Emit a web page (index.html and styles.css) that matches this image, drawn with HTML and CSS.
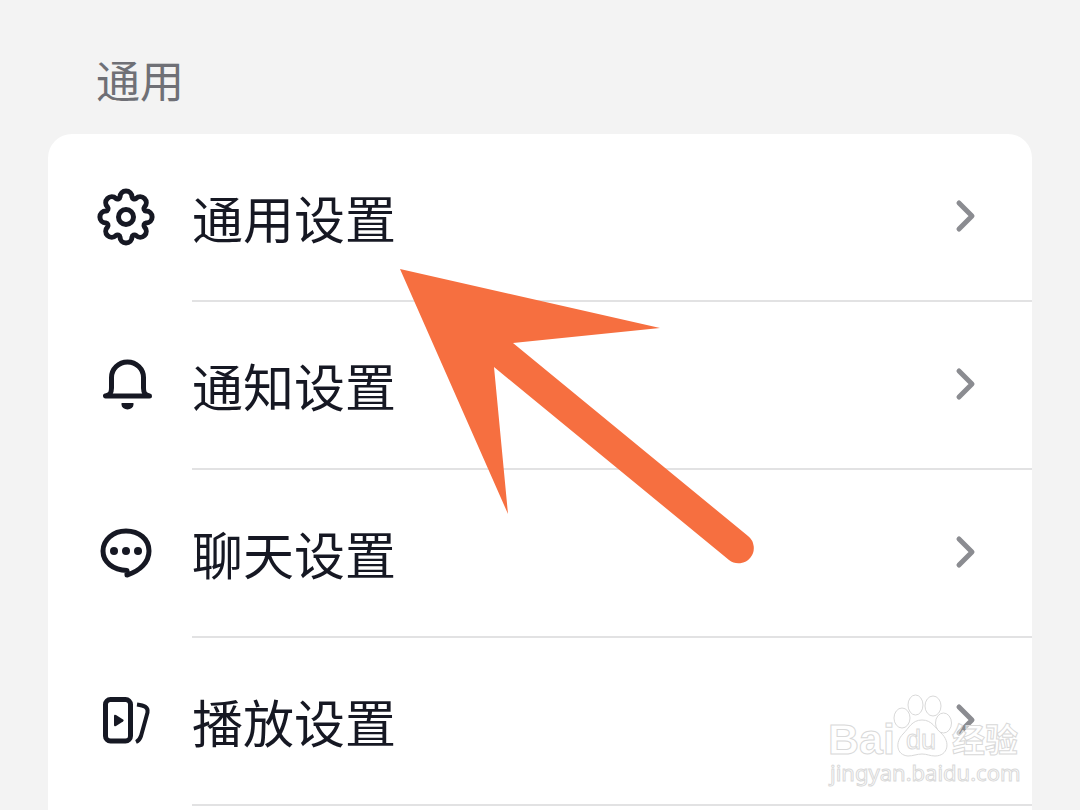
FILE: index.html
```html
<!DOCTYPE html>
<html lang="zh-CN">
<head>
  <meta charset="UTF-8">
  <meta name="viewport" content="width=device-width, initial-scale=1.0">
  <title>通用</title>
  <link rel="stylesheet" href="styles.css">
</head>
<body>
  <h2 class="section-title">通用</h2>

  <nav class="card">
    <a class="row" href="#general">
      <svg class="icon" viewBox="-30 -29 60 60">
        <path d="M-6-20.1A6 6 0 0 1 6-20.1A2.5 2.5 0 0 0 10-18.5A6 6 0 0 1 18.5-10A2.5 2.5 0 0 0 20.1-6A6 6 0 0 1 20.1 6A2.5 2.5 0 0 0 18.5 10A6 6 0 0 1 10 18.5A2.5 2.5 0 0 0 6 20.1A6 6 0 0 1 -6 20.1A2.5 2.5 0 0 0 -10 18.5A6 6 0 0 1 -18.5 10A2.5 2.5 0 0 0 -20.1 6A6 6 0 0 1 -20.1-6A2.5 2.5 0 0 0 -18.5-10A6 6 0 0 1 -10-18.5A2.5 2.5 0 0 0 -6-20.1Z"/>
        <circle cx="0" cy="0" r="7.5"/>
      </svg>
      <span class="row-body">
        <span class="label">通用设置</span>
        <svg class="chevron" viewBox="0 0 24 36"><path d="M7 4L20 17L7 30"/></svg>
      </span>
    </a>

    <a class="row" href="#notify">
      <svg class="icon" viewBox="0 1 60 60">
        <path d="M9.5 41H53.5C48 40 47.5 37 47.5 33V22.5a16 15.5 0 0 0-32 0V33C15.5 37 15 40 9.5 41Z"/>
        <path class="solid" d="M26 48h11q1 0 .5 1.5a6 5 0 0 1-12 0Q25 48 26 48z"/>
      </svg>
      <span class="row-body">
        <span class="label">通知设置</span>
        <svg class="chevron" viewBox="0 0 24 36"><path d="M7 4L20 17L7 30"/></svg>
      </span>
    </a>

    <a class="row" href="#chat">
      <svg class="icon" viewBox="0 1 60 60">
        <path d="M31 47.5V52C44 48 53 39 53 28C53 16 43 8 30 8S7 17 7 28S17 47 31 47.5Z"/>
        <circle class="solid" cx="18" cy="28" r="4"/>
        <circle class="solid" cx="30" cy="28" r="4"/>
        <circle class="solid" cx="42" cy="28" r="4"/>
      </svg>
      <span class="row-body">
        <span class="label">聊天设置</span>
        <svg class="chevron" viewBox="0 0 24 36"><path d="M7 4L20 17L7 30"/></svg>
      </span>
    </a>

    <a class="row" href="#play">
      <svg class="icon" viewBox="0 1 60 60">
        <rect x="9.5" y="8.5" width="25" height="41.5" rx="5"/>
        <path class="solid" d="M18 25q0-2 2-1l7 4.5q1.5 1 0 2l-7 4.5q-2 1-2-1z"/>
        <path class="flat" d="M41 13.5C48 14.5 52.5 16 51.5 21.5L45 45Q43.5 49.5 40 51"/>
      </svg>
      <span class="row-body">
        <span class="label">播放设置</span>
        <svg class="chevron" viewBox="0 0 24 36"><path d="M7 4L20 17L7 30"/></svg>
      </span>
    </a>
  </nav>

  <!-- Pointer arrow -->
  <svg class="pointer" viewBox="400 269 356 296">
    <path d="M400 269L660 328L513 343L748 536A15 15 0 0 1 729 560L494 367L508 514Z"/>
  </svg>

  <!-- Watermark -->
  <svg class="watermark" viewBox="820 690 210 100">
    <g class="paw">
      <ellipse cx="902" cy="718" rx="8" ry="10"/>
      <ellipse cx="915.5" cy="705" rx="7.5" ry="10"/>
      <ellipse cx="933" cy="706" rx="8" ry="10"/>
      <ellipse cx="943.5" cy="723" rx="8" ry="10"/>
      <path d="M922 720C932 720 935 728 941 733C951 742 948 756 935 756C930 756 927 754 922 754S913 756 908 756C896 755 895 742 903 734C909 728 912 720 922 720Z"/>
    </g>
    <text class="wm-name" x="828" y="754">Bai</text>
    <text class="wm-du" x="906" y="749">du</text>
    <text class="wm-cjk" x="952" y="752">经验</text>
    <text class="wm-url" x="830" y="781">jingyan.baidu.com</text>
  </svg>
</body>
</html>
```
FILE: styles.css
```css
* {
  box-sizing: border-box;
}
body {
  position: relative;
  display: flex;
  flex-direction: column;
  min-height: 100vh;
  margin: 0;
  background-color: #f3f3f3;
  font-family: "Noto Sans CJK SC", sans-serif;
}
.section-title {
  margin: 0;
  padding: 47px 96px 23px;
  font-size: 44px;
  font-weight: 400;
  line-height: 64px;
  color: #6f7076;
}
.card {
  flex: 1;
  margin: 0 48px;
  padding-left: 48px;
  background-color: #fff;
  border-radius: 24px 24px 0 0;
}
.row {
  display: flex;
  align-items: center;
  gap: 36px;
  height: 168px;
  color: #161823;
  text-decoration: none;
}
.icon {
  flex: none;
  width: 60px;
  height: 60px;
  fill: none;
  stroke: #161823;
  stroke-width: 5;
  stroke-linecap: round;
  stroke-linejoin: round;
}
.icon .solid {
  fill: #161823;
  stroke: none;
}
.icon .flat {
  stroke-width: 4;
  stroke-linecap: butt;
}
.row-body {
  flex: 1;
  display: flex;
  align-items: center;
  justify-content: space-between;
  height: 100%;
  padding-right: 56px;
  border-bottom: 2px solid #e2e2e3;
}
.label {
  font-size: 51px;
  line-height: 72px;
}
.chevron {
  width: 24px;
  height: 36px;
  fill: none;
  stroke: #8b8c91;
  stroke-width: 5;
  stroke-linecap: round;
  stroke-linejoin: round;
}
.pointer {
  position: absolute;
  left: 400px;
  top: 269px;
  width: 356px;
  fill: #f66f40;
}
.watermark {
  position: absolute;
  right: 50px;
  bottom: 20px;
  width: 210px;
  fill: #fff;
  fill-opacity: 0.5;
  stroke: #d9d9d9;
  stroke-width: 1;
}
.wm-name {
  font: bold 43px "Liberation Sans", sans-serif;
}
.wm-du {
  font: 27px "Liberation Sans", sans-serif;
}
.wm-cjk {
  font: bold 33px "Noto Sans CJK SC", sans-serif;
}
.wm-url {
  font: 22px "Noto Sans", sans-serif;
}
```
